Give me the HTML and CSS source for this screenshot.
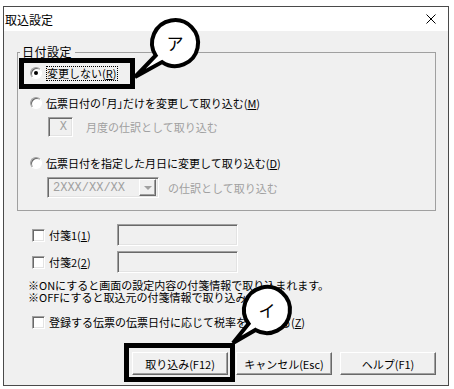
FILE: index.html
```html
<!DOCTYPE html>
<html lang="ja">
<head>
    <meta charset="UTF-8">
    <meta name="viewport" content="width=device-width, initial-scale=1.0">
    <title>取込設定</title>
    <link rel="stylesheet" href="styles.css">
</head>
<body>
    <div class="window">
        <div class="titlebar">
            <span class="title">取込設定</span>
            <svg class="close" width="10" height="10" viewBox="0 0 10 10">
                <path d="M0.5 0.5 L9.5 9.5 M9.5 0.5 L0.5 9.5" stroke="#000" stroke-width="1" fill="none"/>
            </svg>
        </div>
        <div class="content">
            <fieldset class="group">
                <legend>日付設定</legend>
                <div class="opt opt1"><span class="radio on"></span><span class="focus">変更しない(<u>R</u>)</span></div>
                <div class="opt opt2"><span class="radio"></span>伝票日付の<span class="palt">「月」</span>だけを変更して取り込む(<u>M</u>)</div>
                <div class="sub">
                    <span class="month">X</span>
                    <span class="dim">月度の仕訳として取り込む</span>
                </div>
                <div class="opt opt3"><span class="radio"></span>伝票日付を指定した月日に変更して取り込む(<u>D</u>)</div>
                <div class="sub">
                    <span class="combo"><span class="combo-text">2XXX/XX/XX</span><span class="combo-btn"></span></span>
                    <span class="dim">の仕訳として取り込む</span>
                </div>
            </fieldset>

            <div class="tags">
                <div class="tag">
                    <div class="tag-label"><span class="check"></span>付箋1(<u>1</u>)</div>
                    <div class="field"></div>
                </div>
                <div class="tag">
                    <div class="tag-label"><span class="check"></span>付箋2(<u>2</u>)</div>
                    <div class="field"></div>
                </div>
            </div>

            <div class="notes">
                <div>※ONにすると画面の設定内容の付箋情報で取り込まれます。</div>
                <div>※OFFにすると取込元の付箋情報で取り込みます。</div>
            </div>

            <div class="check-row"><span class="check"></span>登録する伝票の伝票日付に応じて税率を変更する(<u>Z</u>)</div>

            <div class="buttons">
                <button class="btn">取り込み(F12)</button>
                <button class="btn">キャンセル(Esc)</button>
                <button class="btn">ヘルプ(F1)</button>
            </div>
        </div>
    </div>

    <!-- callout marks drawn over the dialog -->
    <svg class="marks" width="454" height="389" viewBox="0 0 454 389">
        <rect x="21.5" y="60.5" width="111" height="26" fill="none" stroke="#000" stroke-width="5"/>
        <rect x="126.5" y="345.5" width="106" height="34" fill="none" stroke="#000" stroke-width="5"/>
        <path d="M162.1 62.1 A23 23 0 1 0 155.7 55.5 L135 77 Z" fill="#fff" stroke="#000" stroke-width="4"/>
        <text x="175" y="42">ア</text>
        <path d="M255.5 329.9 A23 23 0 1 0 248.6 323.8 L233 343 Z" fill="#fff" stroke="#000" stroke-width="4"/>
        <text x="267" y="309">イ</text>
    </svg>
</body>
</html>
```

FILE: styles.css
```css
body {
    margin: 0;
    padding: 6px 0 0 3px;
    position: relative;
    background-color: #fff;
    font-family: "Noto Sans CJK JP", sans-serif;
    font-size: 11px;
    color: #000;
}

.window {
    width: 446px;
    height: 380px;
    box-sizing: border-box;
    border: 1px solid #4a4a4a;
    display: flex;
    flex-direction: column;
}

.titlebar {
    height: 24px;
    flex-shrink: 0;
    background-color: #fff;
    display: flex;
    align-items: center;
    justify-content: space-between;
    padding: 0 12px 0 1px;
    font-size: 12px;
}

.close {
    display: block;
}

.content {
    flex: 1;
    background-color: #f0f0f0;
    padding: 14px 12px 0 13px;
}

.group {
    margin: 0;
    padding: 0 0 12px 0;
    border: 1px solid #a0a0a0;
    min-width: 0;
}

.group legend {
    padding: 0 3px 0 2px;
    margin-left: 2px;
    line-height: 14px;
    font-size: 12px;
    letter-spacing: 0.5px;
}

.opt {
    display: flex;
    align-items: center;
    height: 14px;
    margin-left: 12px;
    white-space: nowrap;
}

.opt1 {
    margin-top: 7px;
}

.opt2 {
    margin-top: 16px;
}

.opt3 {
    margin-top: 19px;
}

.palt {
    font-feature-settings: "palt";
}

.radio {
    width: 12px;
    height: 12px;
    box-sizing: border-box;
    border-radius: 50%;
    border: 1px solid;
    border-color: #a0a0a0 #fff #fff #a0a0a0;
    box-shadow: inset 1px 1px 0 #696969;
    background-color: #fff;
    margin-right: 4px;
    display: flex;
    align-items: center;
    justify-content: center;
}

.radio.on::after {
    content: "";
    width: 4px;
    height: 4px;
    border-radius: 50%;
    background-color: #000;
}

.focus {
    border: 1px dotted #000;
    line-height: 13px;
    padding: 0 1px 0 0;
}

.sub {
    display: flex;
    align-items: center;
    margin: 7px 0 0 30px;
}

.month {
    width: 25px;
    height: 20px;
    box-sizing: border-box;
    border: 1px solid;
    border-color: #a0a0a0 #fff #fff #a0a0a0;
    box-shadow: inset 1px 1px 0 #696969, inset -1px -1px 0 #e3e3e3;
    text-align: right;
    padding-right: 5px;
    line-height: 18px;
    color: #a0a0a0;
    font-family: "Liberation Mono", monospace;
    font-size: 12px;
}

.dim {
    color: #a0a0a0;
    margin-left: 13px;
}

.combo {
    width: 112px;
    height: 21px;
    margin-left: -1px;
    box-sizing: border-box;
    border: 1px solid;
    border-color: #a0a0a0 #fff #fff #a0a0a0;
    box-shadow: inset 1px 1px 0 #696969, inset -1px -1px 0 #e3e3e3;
    display: flex;
    align-items: center;
    justify-content: space-between;
    padding: 0 2px 0 5px;
}

.combo + .dim {
    margin-left: 9px;
}

.combo-text {
    color: #a0a0a0;
    font-family: "Liberation Mono", monospace;
    font-size: 12px;
}

.combo-btn {
    width: 17px;
    height: 17px;
    box-sizing: border-box;
    border: 1px solid;
    border-color: #fff #696969 #696969 #fff;
    box-shadow: inset -1px -1px 0 #a0a0a0;
    display: flex;
    align-items: center;
    justify-content: center;
}

.combo-btn::after {
    content: "";
    border-left: 4px solid transparent;
    border-right: 4px solid transparent;
    border-top: 4px solid #a0a0a0;
}

.tags {
    margin-top: 13px;
}

.tag {
    display: flex;
    align-items: center;
    height: 22px;
}

.tag + .tag {
    margin-top: 5px;
}

.tag-label {
    width: 100px;
    box-sizing: border-box;
    padding-left: 15px;
    display: flex;
    align-items: center;
}

.check {
    width: 13px;
    height: 13px;
    box-sizing: border-box;
    border: 1px solid;
    border-color: #a0a0a0 #fff #fff #a0a0a0;
    box-shadow: inset 1px 1px 0 #696969, inset -1px -1px 0 #e3e3e3;
    background-color: #fff;
    margin-right: 4px;
    flex-shrink: 0;
}

.field {
    width: 121px;
    height: 22px;
    box-sizing: border-box;
    border: 1px solid;
    border-color: #a0a0a0 #fff #fff #a0a0a0;
    box-shadow: inset 1px 1px 0 #696969, inset -1px -1px 0 #e3e3e3;
}

.notes {
    margin-top: 6px;
    padding-left: 11px;
    line-height: 12px;
    white-space: nowrap;
}

.check-row {
    margin-top: 12px;
    height: 14px;
    padding-left: 15px;
    display: flex;
    align-items: center;
    white-space: nowrap;
}

.buttons {
    display: flex;
    justify-content: flex-end;
    gap: 8px;
    margin-top: 23px;
}

.btn {
    width: 96px;
    height: 23px;
    box-sizing: border-box;
    padding: 0;
    border: 1px solid;
    border-color: #fff #696969 #696969 #fff;
    box-shadow: inset -1px -1px 0 #a0a0a0;
    background-color: #f0f0f0;
    font-family: "Noto Sans CJK JP", sans-serif;
    font-size: 11px;
    color: #000;
}

.marks {
    position: absolute;
    top: 0;
    left: 0;
    pointer-events: none;
}

.marks text {
    font-family: "Noto Sans CJK JP", sans-serif;
    font-size: 17px;
    text-anchor: middle;
    dominant-baseline: central;
}
```
